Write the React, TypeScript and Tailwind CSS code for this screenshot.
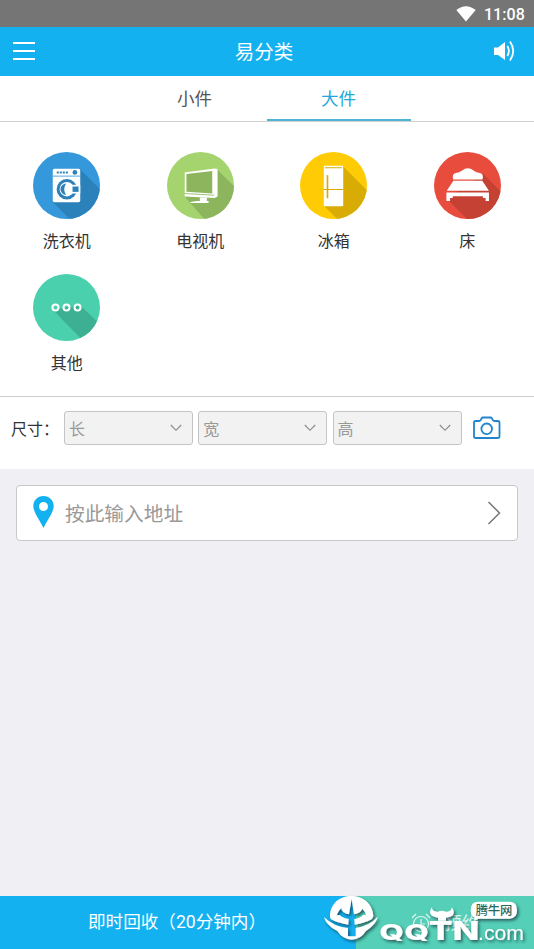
import React, { useState } from 'react';

const tabs = ['小件', '大件'];

const WasherIcon = () => (
  <>
    <circle cx="100" cy="100" r="100" fill="#3498db" />
    <path d="M141 52 L240 151 V240 H149 L59 149 Z" fill="#2b81ba" clipPath="url(#disc)" />
    <rect x="59" y="50" width="82" height="100" rx="5" fill="#fff" />
    <path d="M59 72 H141" stroke="#3498db" strokeWidth="2.5" />
    <path d="M71 61 H106" stroke="#2b81ba" strokeWidth="6" strokeDasharray="6 3" />
    <circle cx="125" cy="61" r="7" fill="#2b81ba" />
    <circle cx="101" cy="111" r="26" fill="none" stroke="#2b81ba" strokeWidth="9" />
    <path d="M99 94 A17 17 0 0 0 99 128 Q87 111 99 94 Z" fill="#2b81ba" />
    <path d="M116 98 H141 V124 H116 Z" fill="#fff" />
    <path d="M118 103 H136 V119 H118 Z" fill="#2b81ba" />
  </>
);

const TvIcon = () => (
  <>
    <circle cx="100" cy="100" r="100" fill="#a5d46f" />
    <path d="M150 52 L240 142 V240 H146 L54 134 Z" fill="#8cb55e" clipPath="url(#disc)" />
    <path d="M53 61 L142 49 L151 51 V133 L142 137 L53 133 Z" fill="#fff" />
    <path d="M58 66 L135 57 V124 L58 119 Z" fill="#8cb55e" />
    <path d="M53 124 L141 129" stroke="#8cb55e" strokeWidth="2.5" />
    <path d="M98 136 H119 V146 H98 Z M70 149 L90 146 H124 V152 H70 Z" fill="#fff" />
  </>
);

const FridgeIcon = () => (
  <>
    <circle cx="100" cy="100" r="100" fill="#fecb05" />
    <path d="M129 43 L240 154 V240 H151 L71 160 Z" fill="#d8ac04" clipPath="url(#disc)" />
    <rect x="71" y="41" width="58" height="121" rx="3" fill="#fff" />
    <path d="M74 47 H126 M71 112 H129" stroke="#d8ac04" strokeWidth="3.5" />
    <path d="M82 69 V138" stroke="#d8ac04" strokeWidth="5" />
  </>
);

const BedIcon = () => (
  <>
    <circle cx="100" cy="100" r="100" fill="#e84c3d" />
    <path d="M147 66 L240 159 V240 H139 L38 139 Z" fill="#c54134" clipPath="url(#disc)" />
    <path
      d="M57 82 Q53 65 65 63 Q76 62 84 55 Q101 42 118 55 Q126 62 137 63 Q149 65 145 82 Z"
      fill="#fff"
    />
    <path d="M58 86 H144 L164 116 H38 Z" fill="#fff" />
    <path d="M37 121 H164 V146 H154 V137 H146 V132 H56 V137 H48 V146 H37 Z" fill="#fff" />
  </>
);

const OtherIcon = () => (
  <>
    <circle cx="100" cy="100" r="100" fill="#4bd0ad" />
    <path d="M141 94 L195 145 L190 200 H150 L59 107 Z" fill="#3db094" clipPath="url(#disc)" />
    <g fill="none" stroke="#fff" strokeWidth="6">
      <circle cx="67" cy="100" r="9" />
      <circle cx="100" cy="100" r="9" />
      <circle cx="133" cy="100" r="9" />
    </g>
  </>
);

const categories = [
  { name: '洗衣机', Icon: WasherIcon },
  { name: '电视机', Icon: TvIcon },
  { name: '冰箱', Icon: FridgeIcon },
  { name: '床', Icon: BedIcon },
  { name: '其他', Icon: OtherIcon },
];

const SizeSelect = ({ label }: { label: string }) => (
  <button className="flex h-[34px] w-[129px] items-center justify-between rounded-[3px] border border-[#c4c4c4] bg-[#f2f2f2] pl-1 pr-2.5 text-base text-[#999]">
    {label}
    <svg className="h-2 w-3" viewBox="0 0 12 8" fill="none" stroke="#888" strokeWidth="1.1">
      <path d="M0.8 1 L6 6.3 L11.2 1" />
    </svg>
  </button>
);

const Watermark = () => (
  <svg className="absolute bottom-0 right-0 h-16 w-56" viewBox="0 0 672 192">
    <defs>
      <filter id="shade" x="-10%" y="-10%" width="125%" height="130%">
        <feDropShadow dx="5" dy="6" stdDeviation="4" floodColor="#123" floodOpacity="0.65" />
      </filter>
    </defs>
    <g filter="url(#shade)" fill="#fff">
      {/* Disc with the trident cut out of it */}
      <path d="M60 94 C60 57 88 33 124 33 C160 33 189 57 190 94 L186 102 Q164 115 134 119 L133 102 Q152 99 160 89 L168 91 Q167 80 157 71 Q154 83 132 88 L125 42 L117 88 Q94 84 94 69 Q84 78 80 91 L89 90 Q98 99 116 102 L115 119 Q84 115 62 102 Z" />
      <path d="M42 96 Q72 126 114 129 V154 H137 V129 Q180 122 203 95 C198 118 178 130 168 138 Q151 164 125 164 Q99 164 82 138 C70 131 48 120 42 96 Z" />
      {/* Horns over the T */}
      <path d="M366 67 C353 84 364 97 384 98 V107 H408 V98 C430 97 438 84 425 67 Q425 81 408 80 Q395 75 384 80 Q366 81 366 67 Z" />
      <text
        x="208"
        y="164"
        textLength="149"
        lengthAdjust="spacingAndGlyphs"
        className="font-[Inter] text-[66px] font-extrabold"
      >
        QQ
      </text>
      <text
        x="356"
        y="164"
        textLength="152"
        lengthAdjust="spacingAndGlyphs"
        className="font-[Inter] text-[78px] font-extrabold"
      >
        TN
      </text>
      <text
        x="504"
        y="164"
        textLength="138"
        lengthAdjust="spacingAndGlyphs"
        className="font-['Liberation_Sans'] text-[58px]"
      >
        .com
      </text>
      <path d="M505 50 H598 Q621 50 621 75 Q621 101 598 101 H505 L492 108 L494 98 Q482 92 482 75 Q482 50 505 50 Z" />
    </g>
    <text x="497" y="90" textLength="110" className="text-[37px] font-medium" fill="#28695d">
      腾牛网
    </text>
  </svg>
);

export default function App() {
  const [activeTab, setActiveTab] = useState('大件');

  return (
    <div className="relative flex h-[949px] w-[534px] flex-col overflow-hidden bg-[#efeff4] font-['Noto_Sans_CJK_SC',sans-serif] text-[#333]">
      {/* Shared clip for the long shadows of the round icons */}
      <svg className="absolute size-0">
        <clipPath id="disc">
          <circle cx="100" cy="100" r="100" />
        </clipPath>
      </svg>

      <div className="flex h-[27px] shrink-0 items-center justify-end gap-[8px] bg-[#757575] pr-[9px] text-white">
        <svg className="h-4 w-5" viewBox="0 0 20 16" fill="#fff">
          <path d="M0.3 4 Q10 -3.7 19.7 4 L10 15.5 Z" />
        </svg>
        <span className="pt-0.5 font-[Roboto] text-base font-medium leading-6 tracking-[0.1px]">11:08</span>
      </div>

      <header className="flex h-[49px] shrink-0 items-center justify-between bg-[#14b1f1] pb-[2px] pl-[13px] pr-[19px]">
        <svg className="h-5 w-[22px]" viewBox="0 0 22 20" stroke="#fff" strokeWidth="1.8">
          <path d="M0 2 H22 M0 10 H22 M0 18 H22" />
        </svg>
        <h1 className="text-[19.5px] text-white">易分类</h1>
        <svg className="h-[22px] w-[22px]" viewBox="0 0 22 22" fill="none" stroke="#fff" strokeWidth="1.8">
          <path d="M1 7.5 H5 L12 2 V20 L5 15 H1 Z" fill="#fff" stroke="none" />
          <path d="M14.3 6 Q17.5 11 14.3 16 M17 1.5 Q23.5 11 17 20.5" />
        </svg>
      </header>

      <nav className="flex h-[46px] shrink-0 justify-center border-b border-[#d0d0d0] bg-white">
        {tabs.map((tab) => (
          <button
            key={tab}
            onClick={() => setActiveTab(tab)}
            className={`h-[45px] w-36 border-b-2 pr-px pt-[2px] text-[17.5px] ${
              activeTab === tab ? 'border-[#4db4d4] text-[#20a8dc]' : 'border-transparent text-[#555]'
            }`}
          >
            {tab}
          </button>
        ))}
      </nav>

      <section className="grid h-[275px] shrink-0 grid-cols-4 content-start border-b border-[#ccc] bg-white pt-[30px]">
        {categories.map(({ name, Icon }) => (
          <button key={name} className="flex h-[122px] flex-col items-center gap-[9px]">
            <svg className="size-[67px]" viewBox="0 0 200 200">
              <Icon />
            </svg>
            <span className="text-base leading-6">{name}</span>
          </button>
        ))}
      </section>

      <section className="flex h-[72px] shrink-0 items-start bg-white pl-[11px] pt-[14px]">
        <span className="w-[53px] shrink-0 whitespace-nowrap text-base leading-[34px]">尺寸：</span>
        <div className="flex gap-[5.3px]">
          <SizeSelect label="长" />
          <SizeSelect label="宽" />
          <SizeSelect label="高" />
        </div>
        <svg className="ml-[11px] mt-[5px] h-6 w-7" viewBox="0 0 28 24" fill="none" stroke="#2085cc" strokeWidth="1.8" strokeLinejoin="round">
          <path d="M2.5 5 H6.5 Q8 4.5 8.5 2.5 Q9 1.5 10 1.5 H17.5 Q18.5 1.5 19 2.5 Q19.8 4.5 21 5 H25 Q26.5 5 26.5 6.5 V20.5 Q26.5 22 25 22 H2.5 Q1 22 1 20.5 V6.5 Q1 5 2.5 5 Z" />
          <circle cx="13.7" cy="12.8" r="5.3" />
        </svg>
      </section>

      <button className="mx-4 mt-4 flex h-14 shrink-0 items-center rounded-[4px] border border-[#c8c8c8] bg-white pl-4 pr-[16px] text-[19.7px] text-[#999]">
        <svg className="mb-0.5 h-8 w-[21px]" viewBox="0 0 21 32">
          <path
            fillRule="evenodd"
            fill="#14b1f1"
            d="M10.5 0 C4.5 0 0.3 4.5 0.3 10 C0.3 16 6 23 10.5 32 C15 23 20.7 16 20.7 10 C20.7 4.5 16.5 0 10.5 0 Z M10.5 6 A4.5 4.5 0 1 1 10.5 15 A4.5 4.5 0 1 1 10.5 6 Z"
          />
        </svg>
        <span className="ml-[11px]">按此输入地址</span>
        <svg className="ml-auto h-6 w-[14px]" viewBox="0 0 14 24" fill="none" stroke="#777" strokeWidth="1.5">
          <path d="M1.5 1 L12.5 12 L1.5 23" />
        </svg>
      </button>

      <footer className="mt-auto flex h-[53px] shrink-0 text-[17.6px] text-white">
        <button className="w-[356px] bg-[#14b1f1] pr-[2px] font-[Roboto,'Noto_Sans_CJK_SC',sans-serif]">即时回收（20分钟内）</button>
        <button className="flex flex-1 items-center justify-center gap-[13px] bg-[#55cfb7] text-white/80">
          <svg className="h-5 w-5" viewBox="0 0 20 20" fill="none" stroke="currentColor" strokeWidth="1.2">
            <circle cx="10" cy="11" r="7.5" />
            <path d="M10 6 V11 H14 M1 5 L5 1 M15 1 L19 5" />
          </svg>
          <span>预约</span>
        </button>
      </footer>

      <Watermark />
    </div>
  );
}
